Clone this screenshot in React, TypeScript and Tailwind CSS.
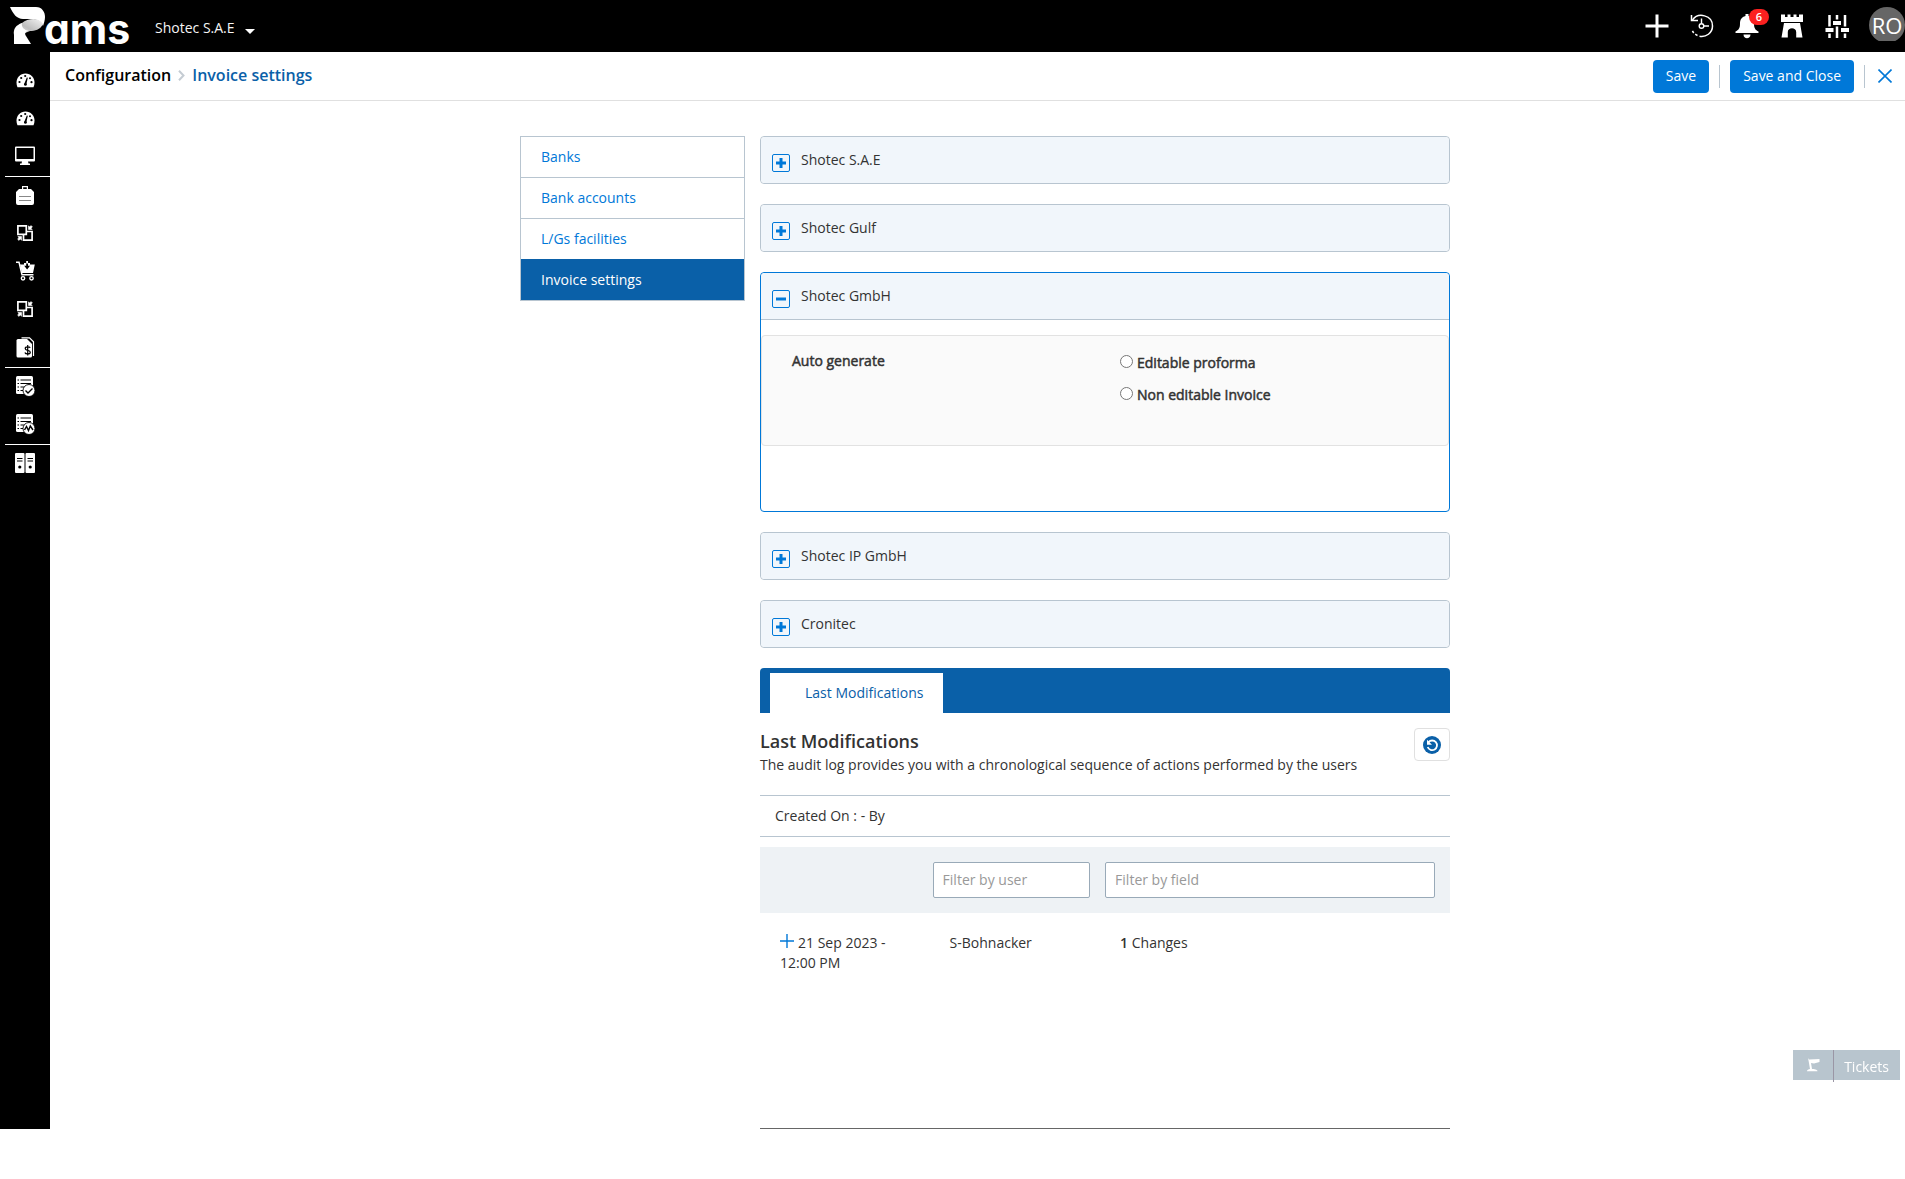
import React, { useState } from "react";

const svgProps = { xmlns: "http://www.w3.org/2000/svg", "aria-hidden": true } as const;

function Logo() {
  return (
    <span className="flex items-start">
      <svg {...svgProps} width="36" height="38" viewBox="0 0 36 38" className="shrink-0">
        <defs>
          <linearGradient id="fold" x1="0" y1="1" x2="1" y2="0">
            <stop offset="0" stopColor="#ffffff" />
            <stop offset="0.45" stopColor="#bdbdbd" />
            <stop offset="1" stopColor="#f5f5f5" />
          </linearGradient>
        </defs>
        <path fill="#fff" d="M0 0h26c6 0 9 5 9 10 0 3-1 6-2 9-2-5-7-7-11-7H13C7 12 3 7 0 0z" />
        <path fill="url(#fold)" d="M12 16c6-5 17-6 21 1-3 6-8 7-13 7l-10 4-5-2c1-4 3-8 7-10z" />
        <path fill="#fff" d="M12 16c-6 2-9 6-8 12l0 9h17l-5-8c-2-3 0-5 3-5-5-1-8-4-7-8z" />
      </svg>
      <span className="-ml-0.5 font-[Inter] text-[41px] leading-[45px] font-bold text-white [font-feature-settings:'cv11']">
        ams
      </span>
    </span>
  );
}

function Gauge() {
  return (
    <svg {...svgProps} width="19" height="15" viewBox="0 0 19 15">
      <path fill="#fff" d="M9.500 0.500C4.300.5.500 4.600.500 9.500c0 1.800.3 3.300 1 4.700h16c.7-1.400 1-2.900 1-4.700C18.500 4.600 14.700.5 9.500.5z" />
      <g fill="#000">
        <circle cx="3.500" cy="9" r="1.100" />
        <circle cx="5.200" cy="5" r="1.100" />
        <circle cx="9.200" cy="3" r="1.100" />
        <circle cx="14" cy="5.200" r="1" />
        <circle cx="15.500" cy="9.200" r="1.100" />
        <path d="M10.800 4.500l1 .3-1.200 5.400c.7.900.3 2.600-1.200 2.600s-2-1.800-.8-2.700z" />
      </g>
    </svg>
  );
}

function Monitor() {
  return (
    <svg {...svgProps} width="20" height="20" viewBox="0 0 20 20">
      <path fill="#fff" fillRule="evenodd" d="M1 .5h18q1 0 1 1v13q0 1-1 1h-6l.5 2H15v1.500H5V17.500h1.500l.5-2H1q-1 0-1-1v-13q0-1 1-1zM1.500 2v11h17V2z" />
    </svg>
  );
}

function Briefcase() {
  return (
    <svg {...svgProps} width="18" height="19" viewBox="0 0 18 19">
      <path fill="#fff" fillRule="evenodd" d="M6 0h6v3h3l3 3v11q0 2-2 2H2q-2 0-2-2V6l3-3h3zm1.200 1.200V3h3.600V1.200z" />
      <path stroke="#888" d="M3 10.500h12M3 14.500h12" />
    </svg>
  );
}

function Exchange() {
  return (
    <svg {...svgProps} width="16" height="16" viewBox="0 0 16 16" fill="none" stroke="#fff">
      <path strokeWidth="1.700" d="M.9.900h8.400v8.400H.9zM9.300 6.500h5.800v8.600H6.500v-5.800" />
      <path fill="#fff" strokeWidth="0.600" d="M11.500 4.500V.8l1.200 1.200L14 .6l1.400 1.400L14 3.300l1.200 1.200zM4.500 11.500v3.700L3.300 14 2 15.400.6 14 2 12.700.8 11.500z" />
    </svg>
  );
}

function Cart() {
  return (
    <svg {...svgProps} width="19" height="20" viewBox="0 0 19 20">
      <path fill="none" stroke="#fff" strokeWidth="1.500" d="M0 1.200h3l3 12.600h11.500" />
      <path fill="#fff" d="M4 3.500h4V2h6v1.500h4.800L17 12H6z" />
      <path fill="#000" d="M10.200 0h1.800v4.800h2L11.100 8.500 8.200 4.800h2z" />
      <path fill="#fff" d="M10.200 0h1.800v2.500h-1.800z" />
      <circle cx="7" cy="17.300" r="1.700" fill="none" stroke="#fff" strokeWidth="1.400" />
      <circle cx="15.500" cy="17.300" r="1.700" fill="none" stroke="#fff" strokeWidth="1.400" />
    </svg>
  );
}

function MoneyDoc() {
  return (
    <svg {...svgProps} width="19" height="21" viewBox="0 0 19 21">
      <path fill="none" stroke="#fff" strokeWidth="1.200" d="M5.500.800h8l4 4V19" />
      <path fill="#fff" d="M2 2h9l5 5v12q0 1.500-1.500 1.500H2Q.5 20.500.5 19V3.500Q.5 2 2 2z" />
      <path fill="none" stroke="#000" strokeWidth="1.200" d="M14.200 10.800c-.5-1.200-5-1.700-5 .7 0 2.300 5.100 1.300 5.100 3.700 0 2.300-4.800 2.200-5.400.3M11.700 8v10.500" />
    </svg>
  );
}

function ListBadge({ mark }: { mark: string }) {
  return (
    <svg {...svgProps} width="19" height="21" viewBox="0 0 19 21">
      <rect x="0" y="0" width="17" height="18" rx="1.500" fill="#fff" />
      <path stroke="#000" strokeWidth="1.200" d="M1.500 4h1.500M4.500 4H15M1.500 7.500h1.500M4.500 7.500H15M1.500 11h1.500M4.500 11H9M1.500 14.500h1.500M4.500 14.500H7" />
      <circle cx="13" cy="14.500" r="6" fill="#fff" stroke="#000" strokeWidth="0.900" />
      <path fill="none" stroke="#000" strokeWidth="1.400" d={mark} />
    </svg>
  );
}

function Binders() {
  return (
    <svg {...svgProps} width="20" height="20" viewBox="0 0 20 20">
      <rect width="9.500" height="20" rx="1" fill="#fff" />
      <rect x="10.500" width="9.500" height="20" rx="1" fill="#fff" />
      <path stroke="#000" strokeWidth="1.200" d="M2 5.500h5.500M2 8h5.500M12.500 5.500H18M12.500 8H18" />
      <circle cx="4.800" cy="14" r="1.600" />
      <circle cx="15.200" cy="14" r="1.600" />
    </svg>
  );
}

const railGroups: { label: string; icon: React.ReactNode }[][] = [
  [
    { label: "Dashboard", icon: <Gauge /> },
    { label: "Reports", icon: <Gauge /> },
    { label: "Monitor", icon: <Monitor /> },
  ],
  [
    { label: "Projects", icon: <Briefcase /> },
    { label: "Transfers", icon: <Exchange /> },
    { label: "Purchases", icon: <Cart /> },
    { label: "Exchanges", icon: <Exchange /> },
    { label: "Invoices", icon: <MoneyDoc /> },
  ],
  [
    { label: "Approvals", icon: <ListBadge mark="M9.500 14.500l2.500 2.500 4.500-4.500" /> },
    { label: "Activity", icon: <ListBadge mark="M8.500 16l2-3.500 2 4 1.800-4.500 2.700 4" /> },
  ],
  [{ label: "Archive", icon: <Binders /> }],
];

function Header() {
  return (
    <header className="flex h-13 items-start justify-between bg-black text-white">
      <div className="flex">
        <a href="#home" aria-label="Pams" className="mt-[7px] ml-2.5 h-[45px] w-[121px]">
          <Logo />
        </a>
        <button className="ml-6 flex h-13 items-center gap-2.5 text-sm leading-5 text-[#f5f5f5]">
          <span className="pt-1">Shotec S.A.E</span>
          <svg {...svgProps} width="10" height="5" viewBox="0 0 10 5" className="mt-2.5">
            <path fill="#fff" d="M0 0h10L5 5z" />
          </svg>
        </button>
      </div>
      <div className="flex h-13 items-center gap-[21px]">
        <button aria-label="Add">
          <svg {...svgProps} width="24" height="24" viewBox="0 0 24 24">
            <path stroke="#fff" strokeWidth="3" d="M12 .5v23M.5 12h23" />
          </svg>
        </button>
        <button aria-label="History">
          <svg {...svgProps} width="24" height="24" viewBox="0 0 24 24" fill="none" stroke="#fff">
            <path strokeWidth="1.500" d="M2.500 6C8-2 22.500 1 22.500 12c0 7-6.500 11.500-13 10.300" />
            <path strokeWidth="1.500" d="M1.500 1v5.500H8" />
            <path strokeWidth="1.500" strokeDasharray="2.500 2" d="M7.500 21.500C4.500 20 2.500 18 1.800 15" />
            <circle cx="11.500" cy="12" r="2.300" strokeWidth="1.400" />
            <path strokeWidth="1.400" d="M11.500 4.500v5M14 12h5" />
          </svg>
        </button>
        <button aria-label="Notifications, 6 unread" className="relative">
          <svg {...svgProps} width="24" height="26" viewBox="0 0 24 26">
            <path fill="#fff" d="M10.500 1h3v2c4 1 5.500 4 5.500 7.500 0 5 1.500 6.500 4.500 8V20H.5v-1.500c3-1.500 4.500-3 4.500-8C5 7 6.500 4 10.500 3zM8.500 21.500h7c0 5-7 5-7 0z" />
          </svg>
          <span className="absolute -top-1 left-3.5 flex h-4 w-5 items-center justify-center rounded-full bg-[#fb2020] text-[11px] leading-4 font-semibold text-white">
            6
          </span>
        </button>
        <button aria-label="Administration">
          <svg {...svgProps} width="24" height="24" viewBox="0 0 24 24">
            <path fill="#fff" d="M1 .5h4V3h2.500V.5h3V3h3V.5h3V3H19V.5h4V8H1zM4 9h16l2.500 14.500h-6.300V18c0-5-8.400-5-8.400 0v5.500H1.500z" />
          </svg>
        </button>
        <button aria-label="Settings">
          <svg {...svgProps} width="24" height="24" viewBox="0 0 24 24">
            <path stroke="#fff" strokeWidth="2.500" d="M4.500 1v23M12 1v23M20 1v23" />
            <path stroke="#000" strokeWidth="7" d="M2 16h5M9.500 9h5M17.500 16h5" />
            <path stroke="#fff" strokeWidth="4" d="M.5 16h8M8 9h8M16 16h8" />
          </svg>
        </button>
        <span className="-mt-1 -ml-px block h-[34px] w-9 overflow-hidden">
          <button
            aria-label="Account"
            className="flex size-9 items-center justify-center rounded-full bg-[#666] text-[22px] leading-8"
          >
            RO
          </button>
        </span>
      </div>
    </header>
  );
}

function ToggleBox({ open }: { open: boolean }) {
  return (
    <span className="mt-1.5 flex size-[18px] shrink-0 items-center justify-center rounded-xs border border-[#0078d8]">
      <svg {...svgProps} width="10" height="10" viewBox="0 0 10 10">
        <path stroke="#0078d8" strokeWidth="3" d={open ? "M0 5h10" : "M0 5h10M5 0v10"} />
      </svg>
    </span>
  );
}

function Panel({ name, open, onToggle }: { name: string; open: boolean; onToggle: () => void }) {
  return (
    <section className={open ? "rounded-sm border border-[#0078d8]" : "rounded-sm border border-[#b8c5d0]"}>
      <button
        onClick={onToggle}
        aria-expanded={open}
        className={
          open
            ? "flex h-[47px] w-full items-center gap-[11px] rounded-t-sm border-b border-[#b8c5d0] bg-[#f1f6fb] px-[11px] text-sm"
            : "flex h-[46px] w-full items-center gap-[11px] rounded-sm bg-[#f1f6fb] px-[11px] text-sm"
        }
      >
        <ToggleBox open={open} />
        <span>{name}</span>
      </button>
      {open && (
        <div className="pt-[15px] pb-[65px]">
          <fieldset className="grid h-[111px] grid-cols-[minmax(0,328px)_1fr] items-start rounded-sm border border-[#e2e2e2] bg-[#fafafa] pt-[15px] pl-[30px] text-sm leading-5 text-[#333] [-webkit-text-stroke:0.5px]">
            <span>Auto generate</span>
            <div className="flex flex-col gap-3 pt-0.5">
              {["Editable proforma", "Non editable Invoice"].map((option) => (
                <label key={option} className="flex items-center gap-1">
                  <input type="radio" name="auto-generate" className="-mt-1 size-[13px]" />
                  {option}
                </label>
              ))}
            </div>
          </fieldset>
        </div>
      )}
    </section>
  );
}

const companies = ["Shotec S.A.E", "Shotec Gulf", "Shotec GmbH", "Shotec IP GmbH", "Cronitec"];
const sections = ["Banks", "Bank accounts", "L/Gs facilities", "Invoice settings"];

function AuditLog() {
  const input =
    "h-9 w-full rounded-xs border border-[#99aab8] bg-white px-[9px] pb-0.5 text-sm text-[#333] outline-none placeholder:text-[#999]";
  return (
    <div className="flex min-h-[461px] flex-col border-b border-[#666]">
      <div role="tablist" className="flex h-[45px] items-end rounded-t-sm bg-[#0a60a8] pl-2.5">
        <button role="tab" aria-selected className="h-10 bg-white pr-5 pl-[35px] text-sm text-[#0a60a8]">
          Last Modifications
        </button>
      </div>
      <div className="flex items-start justify-between pt-[15px]">
        <div>
          <h2 className="text-lg leading-[26px] font-semibold">Last Modifications</h2>
          <p className="text-sm leading-[22px]">
            The audit log provides you with a chronological sequence of actions performed by the users
          </p>
        </div>
        <button
          aria-label="Refresh"
          className="flex h-[33px] w-9 items-center justify-center rounded-sm border border-[#e0e0e0]"
        >
          <svg {...svgProps} width="18" height="18" viewBox="0 0 18 18">
            <circle cx="9" cy="9" r="9" fill="#0a60a8" />
            <path fill="none" stroke="#fff" strokeWidth="1.800" d="M5.500 6.200A4.800 4.800 0 1 1 4.700 11" />
            <path fill="#fff" d="M4 3.800v5h5z" />
          </svg>
        </button>
      </div>
      <p className="mt-[19px] border-y border-[#b8c5d0] px-[15px] py-2.5 text-sm leading-5">Created On : - By</p>
      <table className="mt-2.5 w-full table-fixed text-left text-sm leading-5">
        <colgroup>
          <col className="w-[24%]" />
          <col className="w-[25%]" />
          <col />
        </colgroup>
        <thead className="bg-[#eef2f5]">
          <tr className="h-[66px]">
            <td />
            <td className="pr-2 pl-[7px]">
              <input aria-label="Filter by user" placeholder="Filter by user" className={input} />
            </td>
            <td className="pr-[15px] pl-[7px]">
              <input aria-label="Filter by field" placeholder="Filter by field" className={input} />
            </td>
          </tr>
        </thead>
        <tbody className="align-top">
          <tr>
            <td className="pt-5 pr-8 pl-5">
              <button aria-label="Show changes" className="mr-1 inline-block align-baseline">
                <svg {...svgProps} width="14" height="14" viewBox="0 0 14 14">
                  <path stroke="#0078d8" strokeWidth="1.400" d="M0 7h14M7 0v14" />
                </svg>
              </button>
              21 Sep 2023 - 12:00 PM
            </td>
            <td className="pt-5 pl-6">S-Bohnacker</td>
            <td className="pt-5 pl-[22px]">
              <b className="font-semibold">1</b> Changes
            </td>
          </tr>
        </tbody>
      </table>
    </div>
  );
}

export default function App() {
  const [openPanel, setOpenPanel] = useState<string | null>("Shotec GmbH");
  return (
    <div className="min-h-screen bg-white font-['Open_Sans','Noto_Sans',sans-serif] text-[#333]">
      <Header />
      <div className="flex">
        <nav aria-label="Modules" className="w-[50px] shrink-0 bg-black pt-2.5">
          {railGroups.map((group, i) => (
            <ul key={i} className={i > 0 ? "ml-[5px] border-t border-white" : "ml-[5px]"}>
              {group.map((item) => (
                <li key={item.label}>
                  <a
                    href="#module"
                    aria-label={item.label}
                    className="flex h-[38px] items-center justify-center pr-[5px] pb-0.5"
                  >
                    {item.icon}
                  </a>
                </li>
              ))}
            </ul>
          ))}
        </nav>
        <div className="min-w-0 flex-1">
          <div className="flex h-[49px] items-center justify-between border-b border-[#e0e0e0] pr-[13px] pl-[15px]">
            <nav aria-label="Breadcrumb" className="-mt-0.5 flex items-center text-base leading-5 font-semibold">
              <a href="#configuration" className="text-black">
                Configuration
              </a>
              <svg {...svgProps} width="7" height="11" viewBox="0 0 7 11" className="mx-[7px]">
                <path fill="none" stroke="#c5ccd3" strokeWidth="2" d="M1 .8l4.500 4.700L1 10.200" />
              </svg>
              <span className="text-[#0a60a8]">Invoice settings</span>
            </nav>
            <div className="flex items-center gap-2.5 text-sm">
              <button className="h-[33px] rounded-sm bg-[#0078d8] px-[13px] text-white">Save</button>
              <span className="h-[23px] w-px bg-[#b8c5d0]" />
              <button className="h-[33px] rounded-sm bg-[#0078d8] px-[13px] text-white">Save and Close</button>
              <span className="h-[23px] w-px bg-[#b8c5d0]" />
              <button aria-label="Close" className="ml-[3px]">
                <svg {...svgProps} width="14" height="14" viewBox="0 0 14 14">
                  <path stroke="#0078d8" strokeWidth="1.600" d="M.5.500l13 13M13.500.500l-13 13" />
                </svg>
              </button>
            </div>
          </div>
          <main className="pt-[35px] pl-[15px]">
            <div className="mx-auto flex max-w-[930px] items-start gap-[15px]">
              <nav
                aria-label="Configuration"
                className="w-[225px] shrink-0 divide-y divide-[#b8c5d0] border border-[#b8c5d0] text-sm"
              >
                {sections.map((s) => (
                  <a
                    key={s}
                    href="#section"
                    aria-current={s === "Invoice settings" ? "page" : undefined}
                    className={
                      s === "Invoice settings"
                        ? "-mt-px flex h-[41px] items-center bg-[#0a60a8] px-5 text-white"
                        : "flex h-[41px] items-center px-5 text-[#0078d8]"
                    }
                  >
                    {s}
                  </a>
                ))}
              </nav>
              <div className="flex min-w-0 flex-1 flex-col gap-5">
                {companies.map((c) => (
                  <Panel
                    key={c}
                    name={c}
                    open={openPanel === c}
                    onToggle={() => setOpenPanel(openPanel === c ? null : c)}
                  />
                ))}
                <AuditLog />
              </div>
            </div>
          </main>
        </div>
      </div>
      <button className="fixed right-[5px] bottom-[99px] flex h-[30px] items-center bg-[#b8c5ce] text-sm text-white">
        <span className="flex w-10 justify-center">
          <svg {...svgProps} width="13" height="14" viewBox="0 0 13 14">
            <path fill="#fff" d="M1 0l1 1.500L12.500 1v3L7 5.500 4 5l1 6c2 0 5.500.5 5.500 2.200H0C0 12 1.500 11 3 11L1.800 4z" />
          </svg>
        </span>
        <span className="h-8 w-px self-start bg-[#9a96a5]" />
        <span className="pt-1 pr-[11px] pl-2.5">Tickets</span>
      </button>
    </div>
  );
}
